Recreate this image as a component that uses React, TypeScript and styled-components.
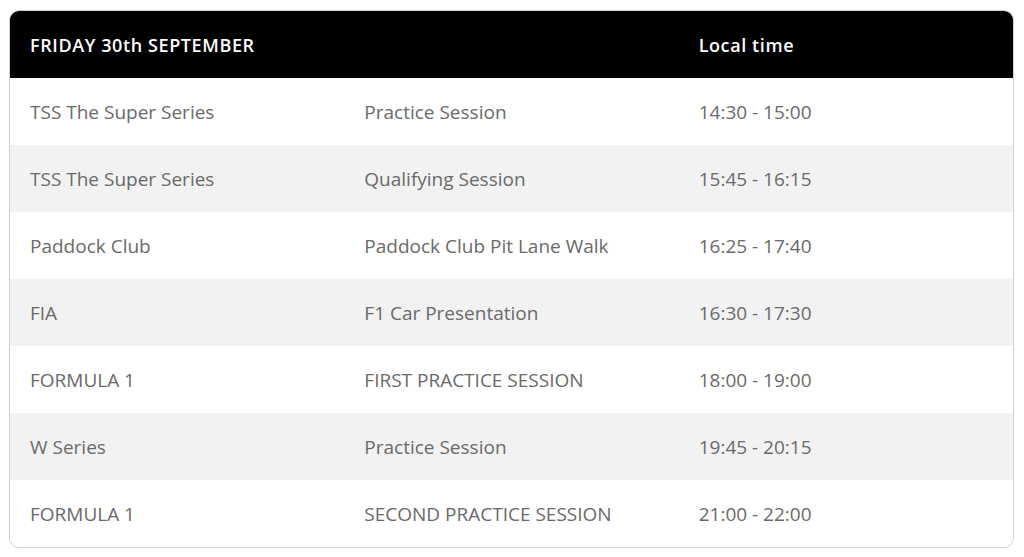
import React from "react";
import styled, { createGlobalStyle } from "styled-components";

const Global = createGlobalStyle`
  html, body { margin: 0; padding: 0; background: #ffffff; }
  body { font-family: "Open Sans", "Noto Sans", sans-serif; }
`;

const Page = styled.div`
  padding: 10px 10px 9px 9px;
`;

const Card = styled.div`
  border: 1px solid #d0d0d0;
  border-radius: 10px;
  overflow: hidden;
  background: #ffffff;
`;

const Table = styled.table`
  width: 100%;
  border-collapse: collapse;
  table-layout: fixed;
`;

const HeadCell = styled.th`
  background: #000000;
  color: #ffffff;
  height: 67px;
  padding: 0 20px;
  text-align: left;
  font-size: 18px;
  font-weight: 600;
  letter-spacing: 0.6px;
`;

const Row = styled.tr<{ $striped: boolean }>`
  background: ${(p) => (p.$striped ? "#f2f2f2" : "#ffffff")};
`;

const Cell = styled.td`
  height: 67px;
  padding: 0 20px;
  color: #6a6a6a;
  font-size: 19px;
  font-weight: 400;
  letter-spacing: 0;
  vertical-align: middle;
`;

const rows = [
  ["TSS The Super Series", "Practice Session", "14:30 - 15:00"],
  ["TSS The Super Series", "Qualifying Session", "15:45 - 16:15"],
  ["Paddock Club", "Paddock Club Pit Lane Walk", "16:25 - 17:40"],
  ["FIA", "F1 Car Presentation", "16:30 - 17:30"],
  ["FORMULA 1", "FIRST PRACTICE SESSION", "18:00 - 19:00"],
  ["W Series", "Practice Session", "19:45 - 20:15"],
  ["FORMULA 1", "SECOND PRACTICE SESSION", "21:00 - 22:00"],
];

export default function App() {
  return (
    <>
      <Global />
      <Page>
        <Card>
          <Table>
            <thead>
              <tr>
                <HeadCell>FRIDAY 30th SEPTEMBER</HeadCell>
                <HeadCell></HeadCell>
                <HeadCell>Local time</HeadCell>
              </tr>
            </thead>
            <tbody>
              {rows.map((r, i) => (
                <Row key={i} $striped={i % 2 === 1}>
                  {r.map((c, j) => (
                    <Cell key={j}>{c}</Cell>
                  ))}
                </Row>
              ))}
            </tbody>
          </Table>
        </Card>
      </Page>
    </>
  );
}
